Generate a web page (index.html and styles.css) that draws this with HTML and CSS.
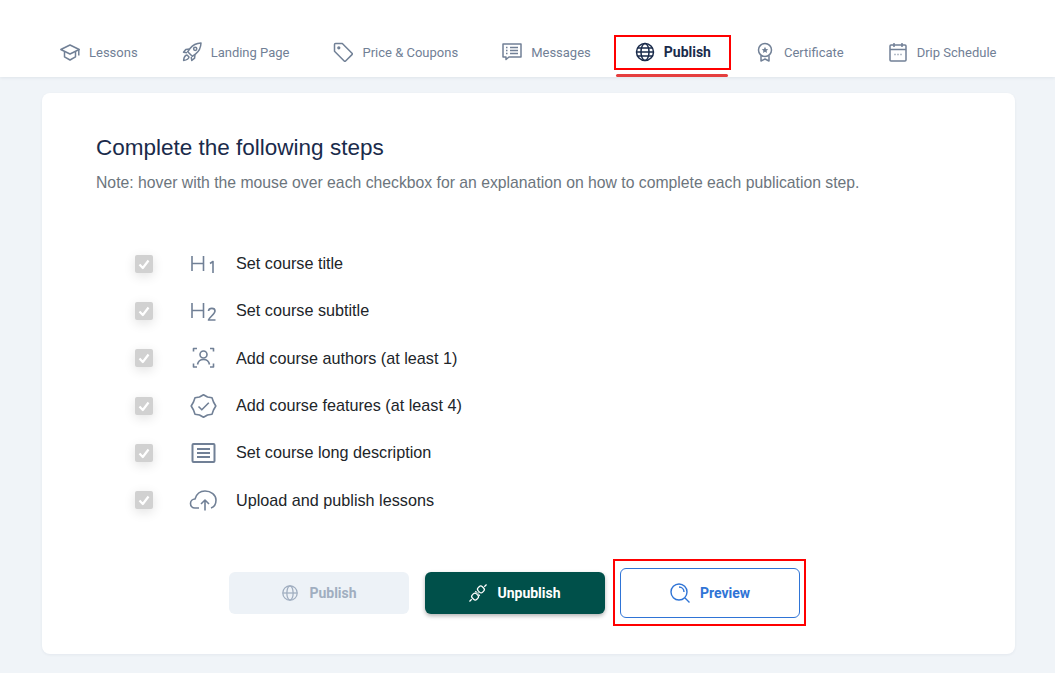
FILE: index.html
```html
<!DOCTYPE html>
<html lang="en">
<head>
    <meta charset="UTF-8">
    <meta name="viewport" content="width=device-width, initial-scale=1.0">
    <title>Publish course</title>
    <link rel="stylesheet" href="styles.css">
</head>
<body>
    <header class="tabs">
        <a class="tab">
            <svg class="tab-icon" viewBox="0 0 20 20"><path d="M.8 7.500 10 3l9.200 4.500L10 12z"/><path d="M4.500 9.800v5l5.500 3.200 5.500-3.200v-5"/><path d="M18.800 7.500v6"/></svg>
            Lessons
        </a>
        <a class="tab">
            <svg class="tab-icon" viewBox="0 0 20 20"><path d="M19 1c-4.800.2-8.300 2-10.800 5.300L5.700 9.700l4.600 4.600 3.400-2.500C17 9.300 18.800 5.800 19 1z"/><circle cx="13.200" cy="6.800" r="1.600"/><path d="M7.500 7 3.800 7.400 1.500 10.200 5 10.800M13 12.500l-.4 3.700-2.800 2.300-.6-3.500M5 13c-1.800.3-3 1.700-3.400 5.400C5.300 18 6.700 16.800 7 15z"/></svg>
            Landing Page
        </a>
        <a class="tab">
            <svg class="tab-icon" viewBox="0 0 20 20"><path d="M1.500 2.500c0-.6.400-1 1-1h6.800l9.700 9.700c.4.400.4 1 0 1.400l-6.400 6.400c-.4.400-1 .4-1.400 0L1.500 9.300z"/><circle cx="5.800" cy="5.800" r=".9"/></svg>
            Price &amp; Coupons
        </a>
        <a class="tab">
            <svg class="tab-icon" viewBox="0 0 20 20"><path d="M1 2h18v13H7l-3 2.500V15H1z"/><path d="M8 5.500h8M8 8.500h8M8 11.500h8M4 5.500h1.500M4 8.500h1.500M4 11.500h1.500"/></svg>
            Messages
        </a>
        <a class="tab tab-active">
            <svg class="tab-icon" viewBox="0 0 20 20"><circle cx="10" cy="10" r="8.500"/><ellipse cx="10" cy="10" rx="4" ry="8.500"/><path d="M1.500 10h17M2.700 6h14.600M2.700 14h14.600"/></svg>
            Publish
        </a>
        <a class="tab">
            <svg class="tab-icon" viewBox="0 0 20 20"><circle cx="10" cy="8" r="6.500"/><path d="m10 4.800 1 2.100 2.200.3-1.600 1.500.4 2.200-2-1.100-2 1.100.4-2.200-1.600-1.500 2.200-.3z" class="icon-fill"/><path d="M6 13.500V19l4-2 4 2v-5.500"/></svg>
            Certificate
        </a>
        <a class="tab">
            <svg class="tab-icon" viewBox="0 0 20 20"><rect x="2" y="3" width="16" height="16" rx="1"/><path d="M2 7.500h16M6 1v4M14 1v4M6.500 12.500h1M9.500 12.500h1M12.500 12.500h1"/></svg>
            Drip Schedule
        </a>
    </header>
    <div class="mark mark-tab"></div>

    <main class="card">
        <h1 class="card-title">Complete the following steps</h1>
        <p class="card-note">Note: hover with the mouse over each checkbox for an explanation on how to complete each publication step.</p>

        <ul class="steps">
            <li class="step">
                <span class="check"><svg viewBox="0 0 18 18"><path d="M4.500 9.500 7.800 13l5.700-7.500"/></svg></span>
                <svg class="step-icon" viewBox="0 0 28 24"><path d="M3 4v15M14.500 4v15M3 11.500h11.500M21 11.500l3-2V21"/></svg>
                <span class="step-text">Set course title</span>
            </li>
            <li class="step">
                <span class="check"><svg viewBox="0 0 18 18"><path d="M4.500 9.500 7.800 13l5.700-7.500"/></svg></span>
                <svg class="step-icon" viewBox="0 0 28 24"><path d="M3 4v15M14.500 4v15M3 11.500h11.500M19.500 12c.3-3.500 6.500-3.500 6.500 0 0 3-5 5.500-6.500 9H26.500"/></svg>
                <span class="step-text">Set course subtitle</span>
            </li>
            <li class="step">
                <span class="check"><svg viewBox="0 0 18 18"><path d="M4.500 9.500 7.800 13l5.700-7.500"/></svg></span>
                <svg class="step-icon" viewBox="0 0 28 24"><path d="M4.500 5.500V2.500H8M21 2.500h3.500v3M4.500 17.500v3.500H8M21 21h3.500v-3.500"/><circle cx="14.500" cy="8.500" r="3.500"/><path d="M8.500 18.500c.6-3.300 2.800-5 6-5s5.400 1.700 6 5"/></svg>
                <span class="step-text">Add course authors (at least 1)</span>
            </li>
            <li class="step">
                <span class="check"><svg viewBox="0 0 18 18"><path d="M4.500 9.500 7.800 13l5.700-7.500"/></svg></span>
                <svg class="step-icon" viewBox="0 0 28 24"><path d="M14.500.7 18.500 3 23 3.700 24.500 8 26.800 12 24.500 16 23 20.300 18.500 21 14.500 23.300 10.500 21 6 20.300 4.500 16 2.200 12 4.500 8 6 3.700 10.500 3z"/><path d="m9.500 12.500 3.300 3.300 7-7"/></svg>
                <span class="step-text">Add course features (at least 4)</span>
            </li>
            <li class="step">
                <span class="check"><svg viewBox="0 0 18 18"><path d="M4.500 9.500 7.800 13l5.700-7.500"/></svg></span>
                <svg class="step-icon step-icon-bold" viewBox="0 0 28 24"><rect x="3.500" y="3" width="22" height="18" rx="1"/><path d="M8 8h13M8 12h13M8 16h13"/></svg>
                <span class="step-text">Set course long description</span>
            </li>
            <li class="step">
                <span class="check"><svg viewBox="0 0 18 18"><path d="M4.500 9.500 7.800 13l5.700-7.500"/></svg></span>
                <svg class="step-icon" viewBox="0 0 28 24"><path d="M10 20H6c-2.800 0-4.500-2-4.500-4.500S3.500 11 6 11c1.500-5 5-8 10-8 6 0 11 4 11 9 0 4-2 7-5 8"/><path d="M16 22.500V12M12 16l4-4 4 4"/></svg>
                <span class="step-text">Upload and publish lessons</span>
            </li>
        </ul>

        <div class="actions">
            <button class="btn btn-disabled">
                <svg class="btn-icon" viewBox="0 0 20 20"><circle cx="10" cy="10" r="8"/><ellipse cx="10" cy="10" rx="3.500" ry="8"/><path d="M2 10h16"/></svg>
                Publish
            </button>
            <button class="btn btn-dark">
                <svg class="btn-icon" viewBox="0 0 20 20"><rect x="3.500" y="10.500" width="6.500" height="7" rx="2.500" transform="rotate(-45 6.750 14)"/><rect x="10" y="2.500" width="6.500" height="7" rx="2.500" transform="rotate(-45 13.250 6)"/><path d="m.5 19.500 2.500-2.500M17 3l2.500-2.500M8.500 9.500l-1.500-1.500M10.500 11.500l1.500 1.500M9.500 10.500l1-1"/></svg>
                Unpublish
            </button>
            <button class="btn btn-outline">
                <svg class="btn-icon" viewBox="0 0 20 20"><circle cx="9" cy="9" r="8"/><path d="M9 4c2.800 0 5 2.200 5 5M15 15l4.500 4.500"/></svg>
                Preview
            </button>
        </div>
    </main>
    <div class="mark mark-preview"></div>
</body>
</html>
```

FILE: styles.css
```css
* {
    margin: 0;
    padding: 0;
    box-sizing: border-box;
}

html, body {
    height: 673px;
    overflow: hidden;
}

body {
    position: relative;
    background-color: #f0f4f8;
    font-family: Roboto, sans-serif;
    color: #212529;
}

svg {
    fill: none;
    stroke: currentColor;
    stroke-linejoin: round;
    flex: none;
}

/* Top tab bar */
.tabs {
    display: flex;
    align-items: flex-end;
    height: 77px;
    padding-left: 38px;
    background-color: #fff;
    box-shadow: 0 1px 3px rgba(30, 50, 80, 0.08);
}

.tab {
    position: relative;
    display: flex;
    align-items: center;
    gap: 9px;
    height: 50px;
    padding: 0 22px;
    font-size: 13px;
    color: #718096;
}

.tab-icon {
    width: 20px;
    height: 20px;
    stroke-width: 1.500;
}

.icon-fill {
    fill: currentColor;
    stroke: none;
}

.tab-active {
    font-size: 14px;
    font-weight: 700;
    color: #1a2b4b;
}

.tab-active::after {
    content: "";
    position: absolute;
    left: 3px;
    right: 5px;
    bottom: 0;
    height: 3px;
    border-radius: 2px;
    background-color: #e53e3e;
}

/* Red annotation frames */
.mark {
    position: absolute;
    border: 2px solid #f00;
}

.mark-tab {
    left: 614px;
    top: 35px;
    width: 117px;
    height: 35px;
}

.mark-preview {
    left: 613px;
    top: 559px;
    width: 193px;
    height: 67px;
}

/* Main card */
.card {
    width: 973px;
    height: 561px;
    margin: 16px 0 0 42px;
    padding: 40px 54px 0;
    background-color: #fff;
    border-radius: 8px;
    box-shadow: 0 1px 3px rgba(30, 50, 80, 0.06);
    font-family: "Liberation Sans", Arial, sans-serif;
}

.card-title {
    font-size: 22.500px;
    font-weight: 400;
    line-height: 30px;
    color: #1a2b4b;
}

.card-note {
    margin-top: 10px;
    font-size: 15.750px;
    line-height: 20px;
    color: #6c757d;
}

.steps {
    list-style: none;
    margin-top: 47px;
    padding-left: 39px;
}

.step {
    display: flex;
    align-items: center;
    height: 47.300px;
}

.check {
    display: flex;
    width: 18px;
    height: 18px;
    border-radius: 2px;
    background-color: #d1d1d1;
    box-shadow: 0 3px 12px rgba(0, 0, 0, 0.12);
}

.check svg {
    stroke: #fff;
    stroke-width: 2.200;
}

.step-icon {
    width: 28px;
    height: 24px;
    margin-left: 36px;
    stroke: #718096;
    stroke-width: 1.600;
}

.step-icon-bold {
    stroke-width: 2;
}

.step-text {
    margin-left: 19px;
    font-size: 16.200px;
    color: #212529;
}

/* Buttons */
.actions {
    display: flex;
    gap: 16px;
    margin-top: 44.500px;
    padding-left: 133px;
    align-items: center;
}

.btn {
    display: flex;
    align-items: center;
    justify-content: center;
    gap: 10px;
    width: 180px;
    height: 42px;
    border: none;
    border-radius: 6px;
    font-family: Roboto, sans-serif;
    font-size: 14px;
    font-weight: 700;
}

.btn-icon {
    width: 18px;
    height: 18px;
    stroke-width: 1.400;
}

.btn-disabled {
    background-color: #edf2f7;
    color: #a0aec0;
}

.btn-dark {
    background-color: #00504a;
    color: #fff;
    box-shadow: 0 2px 4px rgba(0, 0, 0, 0.3);
}

.btn-outline {
    width: 180px;
    height: 50px;
    margin-left: -1px;
    background-color: #fff;
    border: 1px solid #2f74d6;
    color: #2f74d6;
}

.btn-outline .btn-icon {
    width: 20px;
    height: 20px;
}
```
